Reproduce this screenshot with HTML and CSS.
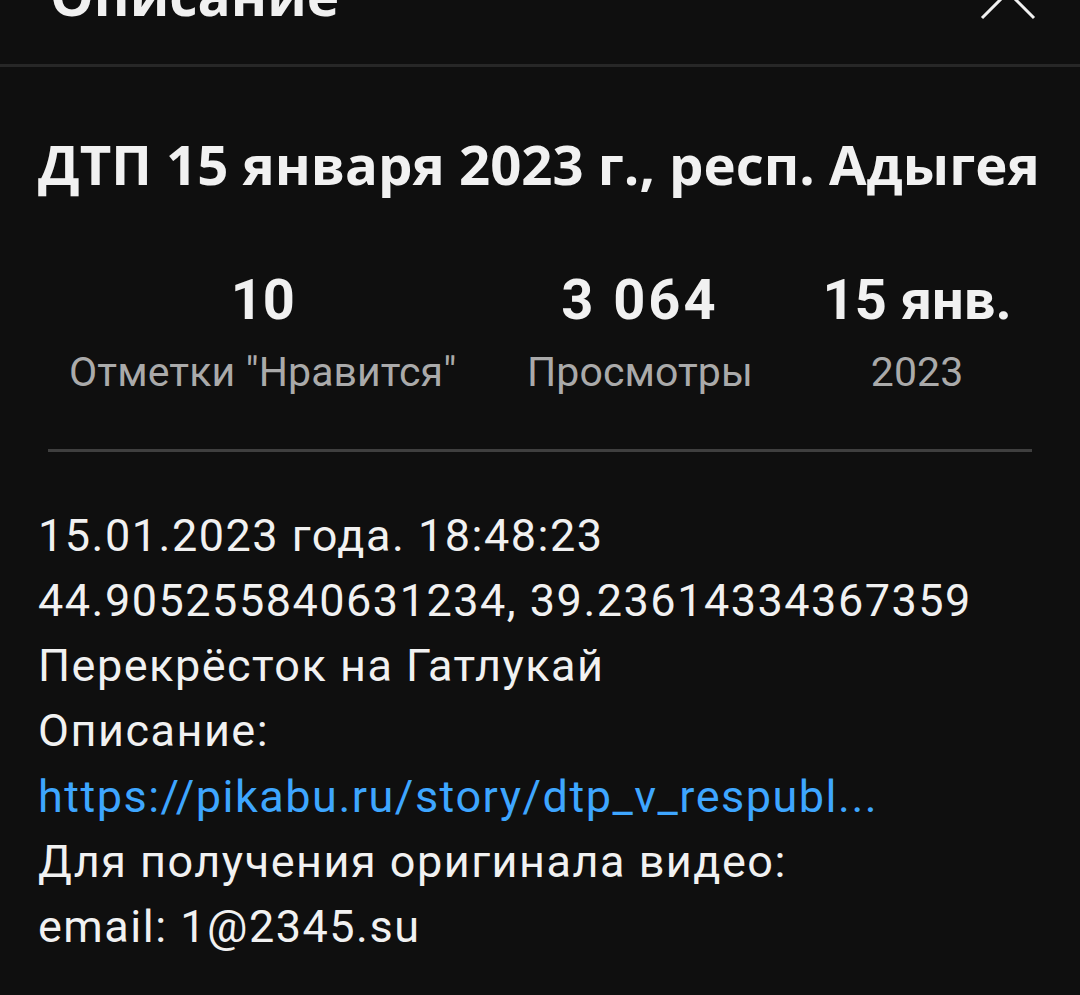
FILE: index.html
```html
<!DOCTYPE html>
<html lang="ru">
<head>
    <meta charset="UTF-8">
    <meta name="viewport" content="width=device-width, initial-scale=1.0">
    <title>Описание</title>
    <link rel="stylesheet" href="styles.css">
</head>
<body>

<header class="sheet-header">
    <h1 class="sheet-title">Описание</h1>
    <button class="close-btn" aria-label="Закрыть">
        <svg width="56" height="56" viewBox="0 0 56 56"><path d="M2 2 L54 54 M54 2 L2 54" stroke="#f1f1f1" stroke-width="3" fill="none"/></svg>
    </button>
</header>

<div class="video-info">
    <h2 class="video-title">ДТП 15 января 2023 г., респ. Адыгея</h2>

    <div class="stats">
        <div class="stat stat-likes">
            <div class="stat-value">10</div>
            <div class="stat-label">Отметки "Нравится"</div>
        </div>
        <div class="stat stat-views">
            <div class="stat-value">3 064</div>
            <div class="stat-label">Просмотры</div>
        </div>
        <div class="stat stat-date">
            <div class="stat-value">15 янв.</div>
            <div class="stat-label">2023</div>
        </div>
    </div>

    <hr class="divider">

    <div class="description">
        <p>15.01.2023 года. 18:48:23</p>
        <p>44.905255840631234, 39.23614334367359</p>
        <p>Перекрёсток на Гатлукай</p>
        <p>Описание:</p>
        <p><a href="#">https://pikabu.ru/story/dtp_v_respubl...</a></p>
        <p>Для получения оригинала видео:</p>
        <p>email: 1@2345.su</p>
    </div>
</div>

</body>
</html>
```

FILE: styles.css
```css
body { background-color: #0f0f0f; color: #f1f1f1; font-family: Roboto, "Noto Sans", sans-serif; margin: 0; overflow: hidden; }
.sheet-header { height: 64px; border-bottom: 3px solid #272727; display: flex; justify-content: space-between; align-items: flex-end; padding: 0 44px 0 50px; overflow: hidden; }
.sheet-title { font-family: "Open Sans", sans-serif; font-weight: 700; font-size: 55px; line-height: 1; margin: 0 0 42px 0; }
.close-btn { background: none; border: none; padding: 0; margin-bottom: 44px; }
.close-btn svg { display: block; }
.video-info { padding: 0 38px; }
.video-title { font-family: "Open Sans", sans-serif; font-weight: 700; font-size: 54.5px; line-height: 1; margin: 70px 0 0 0; white-space: nowrap; }
.stats { display: flex; margin-top: 80px; }
.stat { text-align: center; }
.stat-likes { width: 450px; }
.stat-views { width: 305px; }
.stat-date { width: 250px; }
.stat-value { font-weight: 700; font-size: 56px; line-height: 1; }
.stat-views .stat-value { letter-spacing: 3px; }
.stat-label { color: #aaaaaa; font-size: 41px; letter-spacing: 0.1px; margin-top: 20px; }
.divider { border: none; border-top: 3px solid #3f3f3f; margin: 53px 10px 0 10px; }
.description { margin-top: 51px; font-size: 45px; letter-spacing: 1.5px; }
.description p { margin: 0; line-height: 65.3px; }
.description a { color: #3ea6ff; text-decoration: none; }
```
